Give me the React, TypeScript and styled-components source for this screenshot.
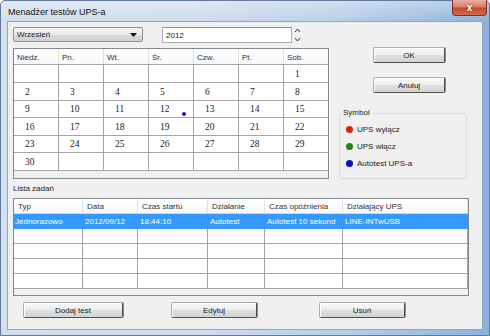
import * as React from 'react';
import styled, { createGlobalStyle } from 'styled-components';

const GlobalStyle = createGlobalStyle`
  html, body {
    margin: 0;
    padding: 0;
    background: #ffffff;
  }
  body {
    font-family: "Liberation Sans", Arial, sans-serif;
    font-size: 8px;
  }
`;

const Window = styled.div`
  width: 490px;
  height: 336px;
  box-sizing: border-box;
  display: flex;
  flex-direction: column;
  padding: 0 6px 5px 6px;
  border: 1px solid #5f7a9c;
  border-radius: 5px 5px 0 0;
  background:
    linear-gradient(180deg, rgba(255, 255, 255, 0.35) 0px, rgba(255, 255, 255, 0) 20px),
    linear-gradient(90deg, #d3dfee 0%, #cfdcec 40%, #b9cfe8 70%, #8db1da 100%);
`;

const TitleBar = styled.div`
  height: 20px;
  display: flex;
  align-items: center;
  justify-content: space-between;
`;

const TitleText = styled.span`
  font-size: 9px;
  color: #111;
  padding-left: 1px;
  padding-top: 2px;
`;

const CloseButton = styled.div`
  align-self: flex-start;
  width: 35px;
  height: 16px;
  box-sizing: border-box;
  margin-top: -1px;
  margin-right: -4px;
  display: flex;
  align-items: center;
  justify-content: center;
  border: 1px solid #7c3325;
  border-top: none;
  border-radius: 0 0 4px 4px;
  background: linear-gradient(180deg, #eab0a3 0%, #d97a64 48%, #c7452b 52%, #d46c4f 100%);
  color: #ffffff;
  font-weight: bold;
  font-size: 10px;
  text-shadow: 0 0 2px #5a1608;
`;

const Client = styled.div`
  flex: 1;
  display: flex;
  flex-direction: column;
  background: #f0f0f0;
  border: 1px solid #8ca6c6;
  padding: 5px 13px 0 5px;
  color: #222;
`;

const TopSection = styled.div`
  display: grid;
  grid-template-columns: 316px 128px;
  column-gap: 10px;
`;

const LeftColumn = styled.div`
  display: flex;
  flex-direction: column;
`;

const ControlsRow = styled.div`
  display: flex;
  align-items: flex-start;
  height: 16px;
`;

const Select = styled.div`
  width: 130px;
  height: 15px;
  box-sizing: border-box;
  display: flex;
  align-items: center;
  justify-content: space-between;
  padding: 0 5px 0 3px;
  border: 1px solid #8e8f8f;
  border-radius: 2px;
  background: linear-gradient(180deg, #f3f3f3 0%, #ebebeb 50%, #dddddd 51%, #d0d0d0 100%);
  color: #222;
`;

const YearInput = styled.div`
  width: 130px;
  height: 16px;
  box-sizing: border-box;
  margin-left: 19px;
  display: flex;
  align-items: center;
  padding-left: 3px;
  border: 1px solid #abadb3;
  border-top-color: #8c8f96;
  background: #ffffff;
  color: #222;
`;

const Spinner = styled.svg`
  margin-left: 2px;
  flex: 0 0 auto;
`;

const Calendar = styled.div`
  margin-top: 5px;
  height: 131px;
  box-sizing: border-box;
  border: 1px solid #828790;
  background: #f0f0f0;
`;

const CalHead = styled.div`
  display: grid;
  grid-template-columns: repeat(6, 45px) 44px;
  height: 16px;
  box-sizing: border-box;
  border-bottom: 1px solid #a4a4a4;
  background: linear-gradient(180deg, #ffffff 0%, #f7f8f9 100%);
`;

const HeadCell = styled.div<{ $last?: boolean }>`
  box-sizing: border-box;
  border-right: ${p => (p.$last ? 'none' : '1px solid #dfe1e4')};
  padding: 1px 0 0 3px;
  display: flex;
  align-items: center;
  color: #333;
`;

const CalBody = styled.div`
  display: grid;
  grid-template-columns: repeat(7, 44px);
  grid-template-rows: 17px 17px 16px 17px 16px 17px;
  gap: 1px;
  background: #a4a4a4;
  border-bottom: 1px solid #a4a4a4;
`;

const DayCell = styled.div`
  display: flex;
  align-items: center;
  padding-left: 11px;
  background: #ffffff;
  font-family: "Liberation Serif", "Times New Roman", serif;
  font-size: 9.5px;
  color: #222;
`;

const Marker = styled.span`
  width: 4px;
  height: 4px;
  border-radius: 50%;
  background: #1020c8;
  margin-left: auto;
  margin-right: 7px;
  align-self: flex-end;
  margin-bottom: 1px;
`;

const RightColumn = styled.div`
  display: flex;
  flex-direction: column;
  align-items: flex-start;
`;

const Button = styled.button<{ $w: number }>`
  width: ${p => p.$w}px;
  height: 16px;
  box-sizing: border-box;
  padding: 0;
  font-family: "Liberation Sans", Arial, sans-serif;
  font-size: 8px;
  line-height: 13px;
  color: #1a1a1a;
  border: 1px solid;
  border-color: #adadad #4f4f4f #4f4f4f #adadad;
  border-radius: 2px;
  background: linear-gradient(180deg, #f7f7f7 0%, #eeeeee 50%, #e0e0e0 51%, #d3d3d3 100%);
  box-shadow: inset 1px 1px 0 #ffffff, 1px 0 0 #8a8a8a;
`;

const OkButton = styled(Button)`
  margin-top: 20px;
  margin-left: 34px;
`;

const CancelButton = styled(Button)`
  margin-top: 14px;
  margin-left: 34px;
`;

const GroupBox = styled.fieldset`
  margin: 15px 0 0 0;
  padding: 0 0 0 6px;
  width: 128px;
  height: 71px;
  box-sizing: border-box;
  border: 1px solid #d9dde2;
  border-radius: 3px;
  display: flex;
  flex-direction: column;
`;

const Legend = styled.legend`
  padding: 0 2px;
  margin-left: -5px;
  line-height: 10px;
  color: #222;
`;

const LegendItem = styled.div`
  display: flex;
  align-items: center;
  height: 17px;
  &:first-of-type {
    margin-top: 3px;
  }
`;

const Dot = styled.span<{ $color: string }>`
  width: 7px;
  height: 7px;
  border-radius: 50%;
  background: ${p => p.$color};
  margin-right: 4px;
`;

const SectionLabel = styled.div`
  margin-top: 5px;
  line-height: 10px;
  height: 10px;
`;

const TaskTable = styled.div`
  margin-top: 4px;
  width: 456px;
  height: 98px;
  box-sizing: border-box;
  border: 1px solid #828790;
  background: #f0f0f0;
`;

const TableRow = styled.div<{ $head?: boolean; $selected?: boolean }>`
  display: grid;
  grid-template-columns: 69px 55px 70px 57px 78px 125px;
  height: 15px;
  box-sizing: border-box;
  border-bottom: 1px solid ${p => (p.$head ? '#d5d5d5' : p.$selected ? '#3399ff' : '#a4a4a4')};
  background: ${p =>
    p.$head ? 'linear-gradient(180deg, #ffffff 0%, #f7f8f9 100%)' : p.$selected ? '#3399ff' : '#ffffff'};
  color: ${p => (p.$selected ? '#ffffff' : p.$head ? '#333' : '#1a1a1a')};
`;

const TableCell = styled.div<{ $head?: boolean; $selected?: boolean; $first?: boolean }>`
  box-sizing: border-box;
  display: flex;
  align-items: center;
  white-space: nowrap;
  overflow: hidden;
  padding-left: ${p => (p.$head ? 4 : p.$first ? 1 : 2)}px;
  border-right: 1px solid ${p => (p.$head ? '#e2e3e5' : p.$selected ? '#3399ff' : '#a4a4a4')};
`;

const ButtonRow = styled.div`
  margin-top: 6px;
  padding-left: 10px;
  display: grid;
  grid-template-columns: 148px 148px 148px;
  justify-items: start;
`;

const monthDays: (number | null)[][] = [
  [null, null, null, null, null, null, 1],
  [2, 3, 4, 5, 6, 7, 8],
  [9, 10, 11, 12, 13, 14, 15],
  [16, 17, 18, 19, 20, 21, 22],
  [23, 24, 25, 26, 27, 28, 29],
  [30, null, null, null, null, null, null],
];

const weekDays = ['Niedz.', 'Pn.', 'Wt.', 'Śr.', 'Czw.', 'Pt.', 'Sob.'];

const columns = ['Typ', 'Data', 'Czas startu', 'Działanie', 'Czas opóźnienia', 'Działający UPS'];

const tasks = [
  ['Jednorazowo', '2012/09/12', '18:44:10', 'Autotest', 'Autotest 10 sekund', 'LINE-INTwUSB'],
  ['', '', '', '', '', ''],
  ['', '', '', '', '', ''],
  ['', '', '', '', '', ''],
  ['', '', '', '', '', ''],
];

const markedDays = [12];

const symbols = [
  { color: '#e21b1b', label: 'UPS wyłącz' },
  { color: '#178a17', label: 'UPS włącz' },
  { color: '#0d0dc8', label: 'Autotest UPS-a' },
];

export default function App() {
  return (
    <>
      <GlobalStyle />
      <Window>
        <TitleBar>
          <TitleText>Menadżer testów UPS-a</TitleText>
          <CloseButton>x</CloseButton>
        </TitleBar>
        <Client>
          <TopSection>
            <LeftColumn>
              <ControlsRow>
                <Select>
                  <span>Wrzesień</span>
                  <svg width="7" height="4" viewBox="0 0 7 4">
                    <path d="M0 0 L7 0 L3.5 4 Z" fill="#111" />
                  </svg>
                </Select>
                <YearInput>2012</YearInput>
                <Spinner width="7" height="16" viewBox="0 0 7 16">
                  <path d="M1 5 L3.5 2 L6 5" fill="none" stroke="#333" strokeWidth="1" />
                  <path d="M1 11 L3.5 14 L6 11" fill="none" stroke="#333" strokeWidth="1" />
                </Spinner>
              </ControlsRow>
              <Calendar>
                <CalHead>
                  {weekDays.map((d, i) => (
                    <HeadCell key={d} $last={i === 6}>{d}</HeadCell>
                  ))}
                </CalHead>
                <CalBody>
                  {monthDays.flat().map((day, i) => (
                    <DayCell key={i}>
                      {day ?? ''}
                      {day !== null && markedDays.includes(day) && <Marker />}
                    </DayCell>
                  ))}
                </CalBody>
              </Calendar>
            </LeftColumn>
            <RightColumn>
              <OkButton $w={72}>OK</OkButton>
              <CancelButton $w={72}>Anuluj</CancelButton>
              <GroupBox>
                <Legend>Symbol</Legend>
                {symbols.map(s => (
                  <LegendItem key={s.label}>
                    <Dot $color={s.color} />
                    {s.label}
                  </LegendItem>
                ))}
              </GroupBox>
            </RightColumn>
          </TopSection>
          <SectionLabel>Lista zadań</SectionLabel>
          <TaskTable>
            <TableRow $head>
              {columns.map(c => (
                <TableCell key={c} $head>{c}</TableCell>
              ))}
            </TableRow>
            {tasks.map((row, r) => (
              <TableRow key={r} $selected={r === 0}>
                {row.map((cell, c) => (
                  <TableCell key={c} $selected={r === 0} $first={c === 0}>{cell}</TableCell>
                ))}
              </TableRow>
            ))}
          </TaskTable>
          <ButtonRow>
            <Button $w={100}>Dodaj test</Button>
            <Button $w={86}>Edytuj</Button>
            <Button $w={86}>Usuń</Button>
          </ButtonRow>
        </Client>
      </Window>
    </>
  );
}
